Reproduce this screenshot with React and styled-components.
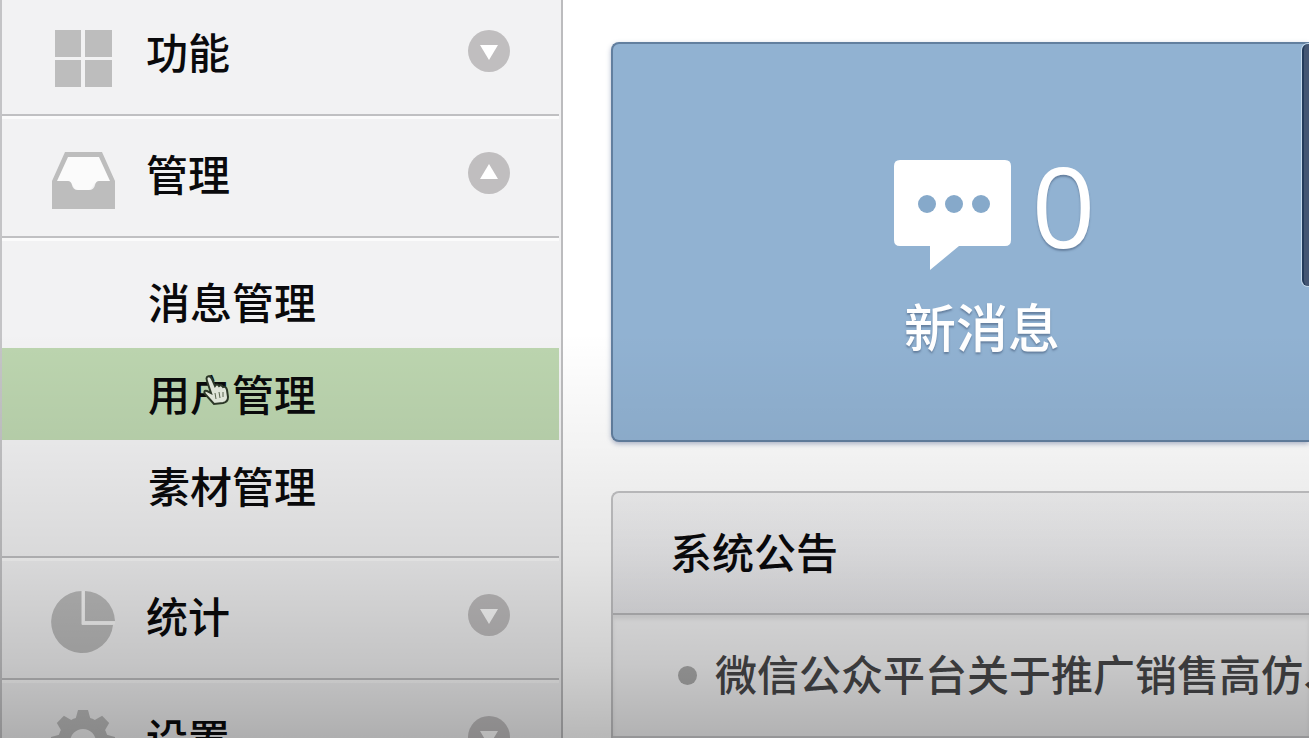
import React, { useState } from 'react';
import styled, { createGlobalStyle } from 'styled-components';

const GlobalStyle = createGlobalStyle`
    * {
        box-sizing: border-box;
    }
    body {
        margin: 0;
        background: #fff;
        font-family: "Noto Sans CJK SC", sans-serif;
        overflow: hidden;
    }
`;

// Whole console, cut off at the window edge
const Page = styled.div`
    position: relative;
    display: flex;
    height: 100vh;
    overflow: hidden;
`;

const Sidebar = styled.nav`
    flex: 0 0 563px;
    padding-right: 2px;
    margin-top: -8px;
    border-left: 2px solid #c4c4c6;
    border-right: 2px solid #bcbcbe;
    background: #f2f2f3;
`;

const MenuButton = styled.button`
    display: flex;
    align-items: center;
    width: 100%;
    height: 122px;
    padding: 0 49px;
    border: 0;
    border-top: 2px solid #c0c0c2;
    box-shadow: inset 0 3px 0 #fbfbfb;
    background: transparent;
    color: #0a0a0c;
    font-family: inherit;
    font-size: 42px;
    font-weight: 500;
    line-height: 60px;
    text-align: left;
    cursor: pointer;
`;

const MenuLabel = styled.span`
    flex: 1;
    margin-left: 31px;
    padding-bottom: 6px;
`;

const ArrowIcon = styled.svg`
    display: block;
    margin-bottom: 6px;
`;

const SubMenu = styled.ul`
    list-style: none;
    margin: 0;
    padding: 18px 0 24px;
    border-top: 2px solid #c0c0c2;
    box-shadow: inset 0 3px 0 #fbfbfb;
`;

const SubLink = styled.a`
    display: block;
    padding: 15px 0 17px 146px;
    background: ${({ $active }) => ($active ? '#bcd5af' : 'transparent')};
    color: #0a0a0c;
    font-size: 42px;
    font-weight: 500;
    line-height: 60px;
    text-decoration: none;
`;

const Content = styled.main`
    flex: 1;
    min-width: 0;
    padding: 42px 0 0 48px;
`;

// Panels run on past the right edge of the window
const Summary = styled.section`
    position: relative;
    display: flex;
    height: 400px;
    border: 2px solid #627f9f;
    border-right: 0;
    border-radius: 8px 0 0 8px;
    background: #91b2d2;
    box-shadow: 0 2px 5px rgba(60, 80, 130, 0.4);
`;

const Tile = styled.a`
    flex: 0 0 738px;
    display: flex;
    flex-direction: column;
    align-items: center;
    padding-top: 108px;
    color: #fff;
    text-decoration: none;
    text-shadow: 0 2px 2px rgba(60, 80, 110, 0.5);
`;

const Count = styled.span`
    display: flex;
    align-items: flex-end;
    gap: 19px;
    height: 120px;
    margin-left: 26px;
    font-family: "Open Sans", sans-serif;
    font-size: 112px;
    line-height: 120px;
`;

const Digits = styled.span`
    padding-bottom: 7px;
`;

const TileLabel = styled.span`
    margin-top: 18px;
    font-size: 52px;
    font-weight: 500;
    line-height: 72px;
`;

const NextPanel = styled.div`
    position: absolute;
    top: 0;
    right: 0;
    width: 7px;
    height: 242px;
    border-left: 2px solid #243c5c;
    border-radius: 6px 0 0 6px;
    background: #445673;
    box-shadow: 0 0 0 1px #c3d8ea;
`;

const Notices = styled.section`
    margin-top: 49px;
    border: 2px solid #c4c4c6;
    border-right: 0;
    border-radius: 8px 0 0 0;
    background: #f6f6f7;
`;

const NoticeTitle = styled.h2`
    margin: 0;
    padding: 28px 0 32px 57px;
    border-bottom: 2px solid #bcbcbe;
    border-radius: 8px 0 0 0;
    background: linear-gradient(#f4f4f5, #e8e8eb);
    color: #0a0a0c;
    font-size: 42px;
    font-weight: 500;
    line-height: 60px;
`;

const NoticeList = styled.ul`
    list-style: none;
    margin: 0;
    padding: 0;
    box-shadow: inset 0 4px 4px rgba(0, 0, 0, 0.08);
`;

const NoticeItem = styled.li`
    display: flex;
    align-items: center;
    gap: 18px;
    height: 123px;
    padding-left: 65px;
    border-bottom: 2px solid #cfcfd1;
`;

const Bullet = styled.span`
    flex: 0 0 19px;
    height: 19px;
    border-radius: 50%;
    background: #adadad;
`;

const NoticeLink = styled.a`
    padding-bottom: 6px;
    color: #48484a;
    font-size: 42px;
    font-weight: 500;
    line-height: 60px;
    text-decoration: none;
    white-space: nowrap;
`;

// Darkens the lower part of the window
const Shade = styled.div`
    position: absolute;
    inset: 0;
    background: linear-gradient(
        rgba(0, 0, 0, 0) 45%,
        rgba(0, 0, 0, 0.04) 58%,
        rgba(0, 0, 0, 0.1) 75%,
        rgba(0, 0, 0, 0.19) 90%,
        rgba(0, 0, 0, 0.28) 100%
    );
    pointer-events: none;
`;

const Pointer = styled.svg`
    position: absolute;
    left: 199px;
    top: 374px;
    pointer-events: none;
`;

function Arrow({ open }) {
    return (
        <ArrowIcon width="42" height="42" viewBox="0 0 42 42" aria-hidden="true">
            <circle cx="21" cy="21" r="21" fill="#c0bebf" />
            <path d={open ? 'M21 12L30 27H12z' : 'M12 15H30L21 30z'} fill="#fff" />
        </ArrowIcon>
    );
}

const teeth = [0, 45, 90, 135, 180, 225, 270, 315];

const icons = {
    grid: <path d="M4 12h26v27H4zM34 12h27v27H34zM4 42h26v27H4zM34 42h27v27H34z" />,
    inbox: (
        <>
            <path d="M14 13H51L61 43H44L38 52H26L20 43H4z" fill="#fbfbfb" />
            <path d="M14 12H51L64 41V69H1V41zM17 17L6 41H17Q20 41 21 45Q22 50 27 50H38Q43 50 44 45Q45 41 48 41H59L48 17z" fillRule="evenodd" />
        </>
    ),
    pie: (
        <>
            <path d="M31 9A31 31 0 1 0 62 43H31z" />
            <path d="M34 9A31 31 0 0 1 64 39H34z" />
            <path d="M32 9V41H64" fill="none" stroke="#fafafa" strokeWidth="3" />
        </>
    ),
    gear: (
        <>
            <circle cx="32" cy="38" r="19" fill="none" stroke="#bdbdbd" strokeWidth="12" />
            {teeth.map(angle => (
                <path key={angle} d="M24 17L27 6H37L40 17z" transform={`rotate(${angle} 32 38)`} />
            ))}
        </>
    ),
};

const menu = [
    { id: 'feature', label: '功能', icon: 'grid' },
    { id: 'manage', label: '管理', icon: 'inbox', children: ['消息管理', '用户管理', '素材管理'] },
    { id: 'stats', label: '统计', icon: 'pie' },
    { id: 'settings', label: '设置', icon: 'gear' },
];

export default function App() {
    const [openId, setOpenId] = useState('manage');
    const [active, setActive] = useState('用户管理');

    // Click handler for the sidebar groups
    function toggle(id) {
        setOpenId(openId === id ? '' : id);
    }

    return (
        <Page>
            <GlobalStyle />
            <Sidebar>
                {menu.map(({ id, label, icon, children }) => (
                    <div key={id}>
                        <MenuButton aria-expanded={openId === id} onClick={() => toggle(id)}>
                            <svg width="64" height="72" viewBox="0 0 64 72" fill="#bdbdbd" aria-hidden="true">
                                {icons[icon]}
                            </svg>
                            <MenuLabel>{label}</MenuLabel>
                            <Arrow open={openId === id} />
                        </MenuButton>
                        {children && openId === id && (
                            <SubMenu>
                                {children.map(name => (
                                    <li key={name}>
                                        <SubLink href="#" $active={active === name} onClick={() => setActive(name)}>
                                            {name}
                                        </SubLink>
                                    </li>
                                ))}
                            </SubMenu>
                        )}
                    </div>
                ))}
            </Sidebar>
            <Content>
                <Summary>
                    <Tile href="#">
                        <Count>
                            <svg width="118" height="112" viewBox="0 0 118 112" aria-hidden="true">
                                <path
                                    d="M6 0H111Q117 0 117 6V80Q117 86 111 86H65L36 110V86H6Q0 86 0 80V6Q0 0 6 0z"
                                    fill="#fff"
                                />
                                <circle cx="33" cy="44" r="9" fill="#86a9ca" />
                                <circle cx="60" cy="44" r="9" fill="#86a9ca" />
                                <circle cx="87" cy="44" r="9" fill="#86a9ca" />
                            </svg>
                            <Digits>0</Digits>
                        </Count>
                        <TileLabel>新消息</TileLabel>
                    </Tile>
                    <NextPanel />
                </Summary>
                <Notices>
                    <NoticeTitle>系统公告</NoticeTitle>
                    <NoticeList>
                        <NoticeItem>
                            <Bullet />
                            <NoticeLink href="#">微信公众平台关于推广销售高仿、</NoticeLink>
                        </NoticeItem>
                    </NoticeList>
                </Notices>
            </Content>
            <Shade />
            <Pointer width="32" height="32" viewBox="0 0 32 32" aria-hidden="true">
                <path
                    d="M8 3Q11 1 13 5L16 12Q18 9 20 12Q22 10 24 13Q27 12 28 16L29 23Q29 28 24 29L15 30L6 20Q4 16 8 17L12 19L8 7Q7 4 8 3z"
                    fill="#dfe5d9"
                    stroke="#2c3828"
                    strokeWidth="2"
                />
                <path d="M16 19l1 6M20 18l1 6M24 18v5" stroke="#59654f" strokeWidth="1" />
            </Pointer>
        </Page>
    );
}
